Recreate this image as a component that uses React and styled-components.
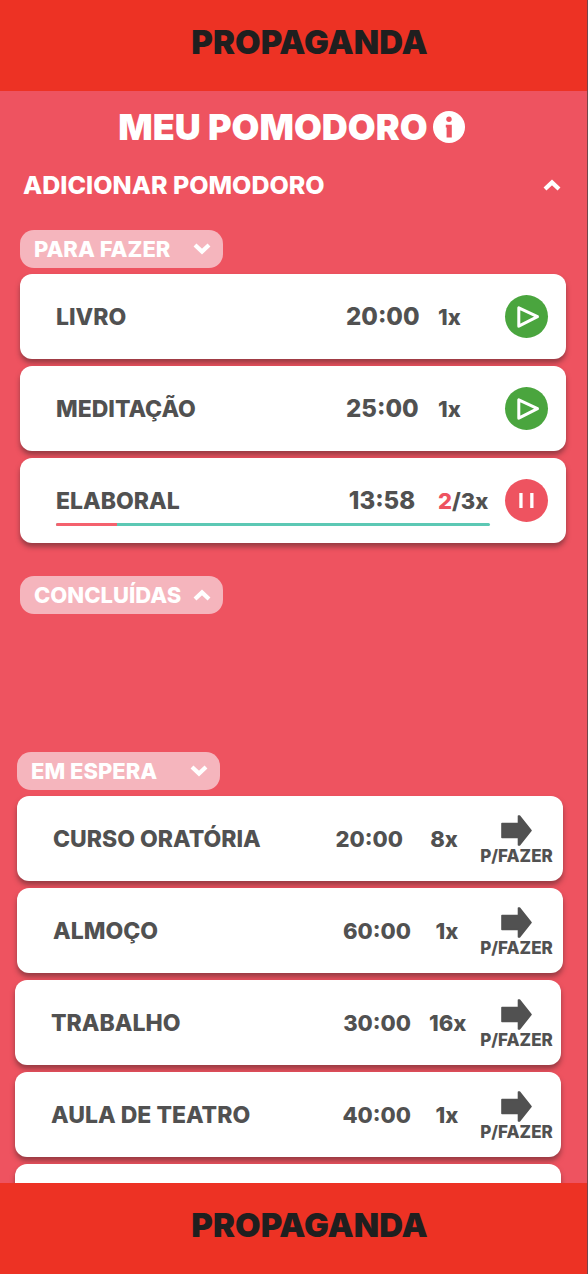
import React from "react";
import styled, { createGlobalStyle } from "styled-components";

const GlobalStyle = createGlobalStyle`
  *, *::before, *::after { box-sizing: border-box; }
  body { margin: 0; background: #ee5360; }
  h1, h2, ul { margin: 0; padding: 0; }
  button { font: inherit; color: inherit; border: 0; background: none; padding: 0; cursor: pointer; }
`;

const Screen = styled.div`
  display: flex;
  flex-direction: column;
  height: 100vh;
  border-right: 1px solid #75444a;
  background: #ee5360;
  color: #515151;
  font-family: Inter, "Liberation Sans", sans-serif;
  font-weight: 800;
`;

const Banner = styled.aside`
  flex: none;
  display: flex;
  align-items: center;
  justify-content: center;
  height: 91px;
  padding: 0 0 8px 32px;
  background: #ed3224;
  color: #1f1f1f;
  font-size: 33px;
  font-weight: 900;
  line-height: 40px;
`;

const Content = styled.main`
  flex: 1 1 0;
  min-height: 0;
  overflow: hidden;
  padding-top: 16px;
`;

const TitleBar = styled.header`
  display: flex;
  align-items: center;
  justify-content: center;
  gap: 5px;
  padding-right: 4px;
  color: #fff;
`;

const Title = styled.h1`
  font-size: 36px;
  font-weight: 900;
  line-height: 40px;
`;

const InfoButton = styled.button`
  display: flex;
`;

const AddButton = styled.button`
  display: flex;
  align-items: center;
  justify-content: space-between;
  width: 100%;
  margin-top: 22px;
  padding: 0 26px 0 23px;
  color: #fff;
  font-size: 25px;
  font-weight: 800;
  line-height: 32px;
`;

const Section = styled.section`
  padding: 0 ${(p) => (p.$waiting ? 24 : 21)}px 0 ${(p) => (p.$waiting ? 17 : 20)}px;
  margin-top: ${(p) => p.$top}px;
  min-height: ${(p) => (p.$empty ? 176 : 0)}px;
`;

const Pill = styled.button`
  display: flex;
  align-items: center;
  justify-content: space-between;
  width: 203px;
  height: 38px;
  padding: 0 12px 0 14px;
  border-radius: 14px;
  background: #f5b5bd;
  color: #fff;
  font-size: 22px;
  line-height: 28px;
`;

const List = styled.ul`
  display: grid;
  gap: 7px;
  margin-top: 6px;
  list-style: none;
`;

const Card = styled.li`
  display: flex;
  align-items: center;
  height: 85px;
  padding: 0 ${(p) => (p.$waiting ? 10 : 18)}px 0 36px;
  margin: 0 ${(p) => (p.$wide ? 2 : 0)}px 0 ${(p) => (p.$wide ? -2 : 0)}px;
  ${(p) => p.$wide && "padding-right: 8px;"}
  border-radius: 12px;
  background: #fff;
  box-shadow: 0 4px 5px rgba(70, 35, 40, 0.5);
`;

const Body = styled.div`
  flex: 1;
  display: grid;
  grid-template-rows: 20px 45px 20px;
`;

const Row = styled.div`
  grid-row: 2;
  display: flex;
  align-items: center;
`;

const Name = styled.h2`
  flex: 1;
  font-size: 23px;
  font-weight: 800;
  line-height: 28px;
  white-space: nowrap;
`;

const Time = styled.time`
  width: 72px;
  font-size: ${(p) => (p.$waiting ? 22 : 24)}px;
  line-height: 28px;
  text-align: ${(p) => (p.$waiting ? "right" : "center")};
`;

const Count = styled.span`
  width: ${(p) => (p.$roomy ? 42 : p.$waiting ? 36 : 52)}px;
  margin-left: ${(p) => (p.$waiting && !p.$roomy ? 18 : 20)}px;
  font-size: 22px;
  line-height: 28px;
  text-align: ${(p) => (p.$waiting ? "center" : "left")};
  white-space: nowrap;
`;

const Current = styled.span`
  color: #ee5360;
`;

const Track = styled.div`
  grid-row: 3;
  height: 3px;
  border-radius: 2px;
  overflow: hidden;
  background: #5cc8b4;
`;

const Elapsed = styled.div`
  height: 100%;
  background: #f4616d;
`;

const RoundButton = styled.button`
  flex: none;
  display: flex;
  align-items: center;
  justify-content: center;
  width: 43px;
  height: 43px;
  margin-left: 15px;
  border-radius: 50%;
  background: ${(p) => (p.$running ? "#ee5360" : "#4aa53e")};
`;

const MoveButton = styled.button`
  flex: none;
  display: flex;
  flex-direction: column;
  align-items: center;
  width: 73px;
  margin-left: 15px;
  padding-top: 4px;
  font-size: 17px;
  line-height: 20px;
`;

const Chevron = ({ up }) => (
  <svg width="18" height="12" viewBox="0 0 18 12" aria-hidden="true">
    <path d={up ? "M2 10 9 3.4 16 10" : "M2 2 9 8.6 16 2"} fill="none" stroke="#fff" strokeWidth="4.2" />
  </svg>
);

const InfoIcon = () => (
  <svg width="32" height="32" viewBox="0 0 32 32" aria-hidden="true">
    <circle cx="16" cy="16" r="16" fill="#fff" />
    <circle cx="16" cy="8.300" r="2.700" fill="#ee5360" />
    <path d="M12.800 13.800H18.800V26.400H13.600V16.400H12.800Z" fill="#ee5360" />
  </svg>
);

const PlayIcon = () => (
  <svg width="43" height="43" viewBox="0 0 43 43" aria-hidden="true">
    <path d="M13.800 12.800V31.200L32.500 21.700Z" fill="none" stroke="#fff" strokeWidth="3" strokeLinejoin="round" />
  </svg>
);

const PauseIcon = () => (
  <svg width="43" height="43" viewBox="0 0 43 43" aria-hidden="true">
    <path d="M14.300 14h3.300v15h-3.300zM25.200 14h3.300v15h-3.300z" fill="#fff" />
  </svg>
);

const ArrowIcon = () => (
  <svg width="31" height="31" viewBox="0 0 31 31" aria-hidden="true">
    <path
      d="M1 8.500H17.500V1H18.500L30 15.500 18.500 30H17.500V22.500H1Z"
      fill="#515151"
      stroke="#515151"
      strokeWidth="1.600"
      strokeLinejoin="round"
    />
  </svg>
);

const todo = [
  { name: "LIVRO", time: "20:00", count: "1x" },
  { name: "MEDITAÇÃO", time: "25:00", count: "1x" },
  { name: "ELABORAL", time: "13:58", current: "2", count: "/3x", elapsed: 14 },
];

const waiting = [
  { name: "CURSO ORATÓRIA", time: "20:00", count: "8x", roomy: true },
  { name: "ALMOÇO", time: "60:00", count: "1x" },
  { name: "TRABALHO", time: "30:00", count: "16x", wide: true },
  { name: "AULA DE TEATRO", time: "40:00", count: "1x", wide: true },
];

const TodoCard = ({ item }) => {
  const running = item.elapsed !== undefined;
  return (
    <Card>
      <Body>
        <Row>
          <Name>{item.name}</Name>
          <Time>{item.time}</Time>
          <Count>
            {item.current && <Current>{item.current}</Current>}
            {item.count}
          </Count>
        </Row>
        {running && (
          <Track role="progressbar" aria-label={item.name} aria-valuenow={item.elapsed}>
            <Elapsed style={{ width: `${item.elapsed}%` }} />
          </Track>
        )}
      </Body>
      <RoundButton $running={running} aria-label={running ? "Pausar" : "Iniciar"}>
        {running ? <PauseIcon /> : <PlayIcon />}
      </RoundButton>
    </Card>
  );
};

const WaitingCard = ({ item }) => (
  <Card $waiting $wide={item.wide}>
    <Body>
      <Row>
        <Name>{item.name}</Name>
        <Time $waiting>{item.time}</Time>
        <Count $waiting $roomy={item.roomy}>{item.count}</Count>
      </Row>
    </Body>
    <MoveButton>
      <ArrowIcon />
      P/FAZER
    </MoveButton>
  </Card>
);

export default function App() {
  return (
    <Screen>
      <GlobalStyle />
      <Banner>PROPAGANDA</Banner>
      <Content>
        <TitleBar>
          <Title>MEU POMODORO</Title>
          <InfoButton aria-label="Informações"><InfoIcon /></InfoButton>
        </TitleBar>
        <AddButton>ADICIONAR POMODORO<Chevron up /></AddButton>
        <Section $top={29}>
          <Pill>PARA FAZER<Chevron /></Pill>
          <List>
            {todo.map((item) => <TodoCard key={item.name} item={item} />)}
          </List>
        </Section>
        <Section $top={33} $empty>
          <Pill>CONCLUÍDAS<Chevron up /></Pill>
        </Section>
        <Section $top={0} $waiting>
          <Pill>EM ESPERA<Chevron /></Pill>
          <List>
            {waiting.map((item) => <WaitingCard key={item.name} item={item} />)}
            <Card $waiting $wide />
          </List>
        </Section>
      </Content>
      <Banner>PROPAGANDA</Banner>
    </Screen>
  );
}
